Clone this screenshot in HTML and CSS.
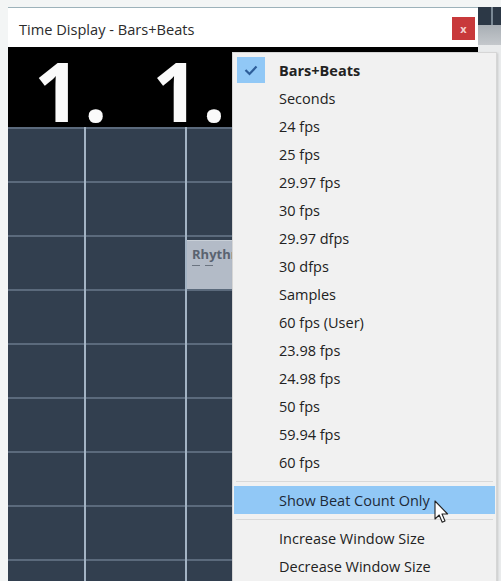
FILE: index.html
```html
<!DOCTYPE html>
<html>
<head>
<meta charset="utf-8">
<title>Time Display - Bars+Beats</title>
<link rel="stylesheet" href="styles.css">
</head>
<body>
<div class="screen">
  <div class="window">
    <div class="titlebar">
      <span class="title">Time Display - Bars+Beats</span>
      <span class="close">x</span>
    </div>
    <div class="display">
      <span class="seg">1.</span>
      <span class="seg">1.</span>
    </div>
    <div class="grid">
      <div class="clip">
        <span class="clip-name">Rhythm</span>
        <span class="clip-marks"><i></i><i></i></span>
      </div>
    </div>
  </div>
  <div class="backapp">
    <div class="backapp-top"><i></i></div>
    <div class="backapp-mid"></div>
    <div class="backapp-rest"></div>
  </div>

  <div class="menu">
    <div class="item checked"><span class="check"><svg width="28" height="26" viewBox="0 0 28 26"><polyline points="8.5,13 12.5,17 19.5,9.5" fill="none" stroke="#2d5d99" stroke-width="2.2"/></svg></span><span class="label bold">Bars+Beats</span></div>
    <div class="item"><span class="label">Seconds</span></div>
    <div class="item"><span class="label">24 fps</span></div>
    <div class="item"><span class="label">25 fps</span></div>
    <div class="item"><span class="label">29.97 fps</span></div>
    <div class="item"><span class="label">30 fps</span></div>
    <div class="item"><span class="label">29.97 dfps</span></div>
    <div class="item"><span class="label">30 dfps</span></div>
    <div class="item"><span class="label">Samples</span></div>
    <div class="item"><span class="label">60 fps (User)</span></div>
    <div class="item"><span class="label">23.98 fps</span></div>
    <div class="item"><span class="label">24.98 fps</span></div>
    <div class="item"><span class="label">50 fps</span></div>
    <div class="item"><span class="label">59.94 fps</span></div>
    <div class="item"><span class="label">60 fps</span></div>
    <div class="sep"></div>
    <div class="item hover"><span class="label">Show Beat Count Only</span></div>
    <div class="sep"></div>
    <div class="item"><span class="label">Increase Window Size</span></div>
    <div class="item"><span class="label">Decrease Window Size</span></div>
  </div>

  <svg class="cursor" width="16" height="26" viewBox="0 0 16 26"><path d="M1,1 L1,19 L5.2,15 L8.2,22.2 L11,21 L8,14 L13.6,14 Z" fill="#fff" stroke="#222" stroke-width="1.1" stroke-linejoin="round"/></svg>
</div>
</body>
</html>
```
FILE: styles.css
```css
html, body {
  margin: 0;
  padding: 0;
}
body {
  background: #f3f5f5;
  font-family: "Open Sans", "Noto Sans", sans-serif;
}
.screen {
  position: relative;
  width: 501px;
  height: 581px;
  overflow: hidden;
  display: flex;
  padding-top: 7px;
  box-sizing: border-box;
}
.window {
  margin-left: 8px;
  width: 470px;
  display: flex;
  flex-direction: column;
  background: #fff;
  border-top: 1px solid #9db2ba;
}
.titlebar {
  height: 39px;
  display: flex;
  align-items: center;
  justify-content: space-between;
  padding: 0 3px 0 11px;
  box-sizing: border-box;
}
.title {
  font-size: 14.6px;
  color: #2b2b2b;
  margin-top: 2px;
}
.close {
  width: 23px;
  height: 23px;
  background: #c8393b;
  color: #f4d0d0;
  font-size: 11px;
  font-weight: 700;
  display: flex;
  align-items: center;
  justify-content: center;
  line-height: 1;
  margin-top: 2px;
}
.display {
  height: 80px;
  background: #000;
  display: flex;
  align-items: flex-end;
  gap: 42px;
  padding: 0 0 0 26px;
  box-sizing: border-box;
}
.seg {
  color: #fafafa;
  font-size: 82px;
  font-weight: 700;
  line-height: 60px;
  height: 60px;
  letter-spacing: 3px;
  margin-bottom: 7px;
}
.grid {
  position: relative;
  flex: 1;
  background-color: #323f4f;
  background-image:
    linear-gradient(to right, transparent 76px, #a3b3c4 76px, #a3b3c4 78px, transparent 78px, transparent 177px, #a3b3c4 177px, #a3b3c4 179px, transparent 179px),
    repeating-linear-gradient(to bottom, #5b6a7c 0, #5b6a7c 2px, transparent 2px, transparent 54px);
}
.clip {
  position: absolute;
  left: 179px;
  top: 113px;
  width: 60px;
  height: 49px;
  background: #b3bbc7;
  border-top: 1px solid #c9d0d8;
  box-sizing: border-box;
  padding: 6px 0 0 5px;
  display: flex;
  flex-direction: column;
  gap: 3px;
}
.clip-name {
  font-size: 13px;
  font-weight: 700;
  color: #5a6370;
  line-height: 15px;
}
.clip-marks {
  display: flex;
  gap: 5px;
}
.clip-marks i {
  display: block;
  width: 8px;
  height: 1px;
  background: #6b7480;
}
.backapp {
  width: 23px;
  display: flex;
  flex-direction: column;
}
.backapp-top {
  height: 18px;
  background: #2c3846;
  position: relative;
}
.backapp-top i {
  position: absolute;
  left: 13px;
  top: 0;
  width: 2px;
  height: 18px;
  background: #7a8894;
}
.backapp-mid {
  height: 20px;
  background: linear-gradient(#a8aeb4, #c4c8cc);
}
.backapp-rest {
  flex: 1;
  background: #e9ebec;
}
.menu {
  position: absolute;
  left: 232px;
  top: 52px;
  width: 265px;
  height: 560px;
  background: #f1f1f1;
  border: 1px solid #d6d6d6;
  box-sizing: border-box;
  padding: 3px 1px;
  box-shadow: 1px 1px 2px rgba(0,0,0,0.15);
}
.item {
  height: 28px;
  display: flex;
  align-items: center;
  position: relative;
  padding-left: 45px;
  font-size: 14.5px;
  color: #222;
}
.label.bold {
  font-weight: 700;
}
.check {
  position: absolute;
  left: 3px;
  top: 1px;
  width: 28px;
  height: 26px;
  background: #91c8f6;
  display: block;
}
.check svg {
  display: block;
}
.item.hover {
  background: #91c8f6;
  color: #1e2a38;
}
.sep {
  height: 1px;
  background: #d9d9d9;
  margin: 5px 2px 4px 2px;
}
.cursor {
  position: absolute;
  left: 434px;
  top: 500px;
}
```
